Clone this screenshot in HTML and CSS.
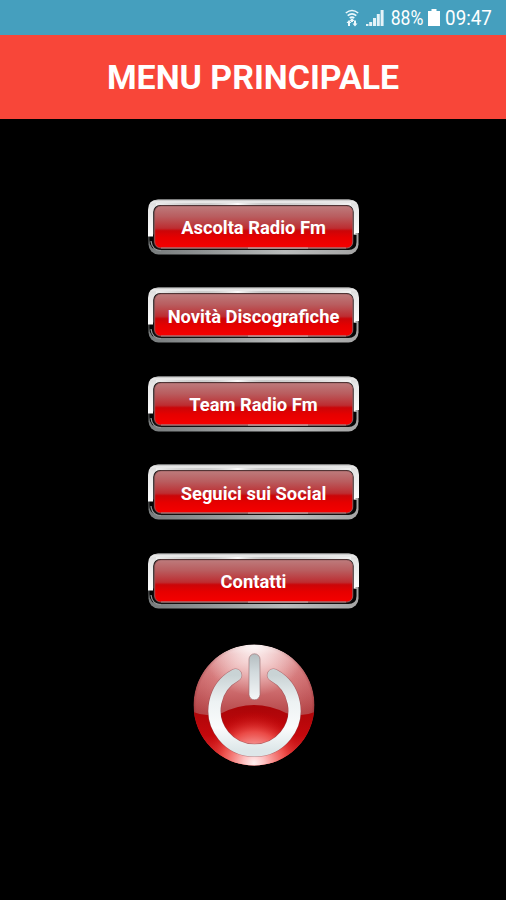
FILE: index.html
```html
<!DOCTYPE html>
<html lang="it">
<head>
<meta charset="utf-8">
<title>Menu Principale</title>
<link rel="stylesheet" href="styles.css">
</head>
<body>
<svg class="defs" width="0" height="0" aria-hidden="true">
  <defs>
    <linearGradient id="silver" x1="0" y1="0" x2="0" y2="1">
      <stop offset="0" stop-color="#b5b5b5"/><stop offset=".06" stop-color="#ececec"/><stop offset=".12" stop-color="#dedede"/><stop offset=".18" stop-color="#e5e5e5"/><stop offset="1" stop-color="#fff"/>
    </linearGradient>
    <linearGradient id="shine" x1="0" y1="0" x2="1" y2="0">
      <stop offset="0" stop-color="#fff" stop-opacity=".5"/><stop offset=".2" stop-color="#999" stop-opacity=".25"/><stop offset=".42" stop-color="#fff" stop-opacity=".9"/><stop offset=".58" stop-color="#999" stop-opacity=".3"/><stop offset="1" stop-color="#fff" stop-opacity=".6"/>
    </linearGradient>
    <linearGradient id="chrome" x1="0" y1="0" x2="1" y2="0">
      <stop offset="0" stop-color="#777b7c"/><stop offset=".25" stop-color="#8e9293"/><stop offset=".65" stop-color="#b9bcbc"/><stop offset="1" stop-color="#a5a5a5"/>
    </linearGradient>
    <linearGradient id="red" x1="0" y1="0" x2="0" y2="1">
      <stop offset="0" stop-color="#bd7b7c"/><stop offset=".25" stop-color="#b95d5f"/><stop offset=".53" stop-color="#bd2d31"/><stop offset=".59" stop-color="#cb0508"/><stop offset=".75" stop-color="#e60000"/><stop offset="1" stop-color="#f60000"/>
    </linearGradient>
    <symbol id="plate" viewBox="0 0 211 56">
      <rect x=".5" y=".5" width="210" height="55" rx="10" fill="url(#chrome)"/>
      <path d="M1.300 36H208.500V43Q208.500 51 200 51H12Q1.300 51 1.300 41Z" fill="#050505"/>
      <path d="M3 42Q4 51.500 13 51.500" fill="none" stroke="#929697" stroke-width="1.300"/>
      <path d="M0 37.500V11Q0 .5 10 .5H201Q211 .5 211 11V34H207.500V35H5V37.500Z" fill="url(#silver)"/>
      <rect x="8" y="4" width="195" height="2.500" fill="url(#shine)"/>
      <rect x="5.200" y="6" width="200.500" height="44.700" rx="7" fill="#171111"/>
      <rect x="6.700" y="7" width="198" height="42" rx="6" fill="url(#red)" stroke="#9c6062" stroke-width=".9"/>
      <path d="M13 49H198" stroke="#a98080" stroke-width="1"/>
      <rect x="100" y="48.600" width="60" height=".9" fill="#eed5d5" opacity=".7"/>
    </symbol>
  </defs>
</svg>
<header class="status">
  <svg class="wifi" viewBox="0 0 14 18"><g fill="none" stroke="#edf8fc" stroke-width="1.600"><path d="M.8 4Q7-1 13.200 4M2.700 6.700Q7 3.200 11.300 6.700M4.700 9Q7 7.200 9.300 9"/></g><path d="M7 9l2.500 3H8v1H6v-1H4.500zM4 11l2.500 3H5v3H3v-3H1.500zM10 17.500L7.500 14.500H9v-3h2v3h1.500z" fill="#edf8fc"/></svg>
  <svg class="signal" viewBox="0 0 18 18"><path d="M0 17v-2h2.500v2zM3.200 17v-4H6.200v4zM7 17v-8H10v8zM10.800 17V5h3v12zM14.600 17V1h3v16z" fill="#e5f3f8"/></svg>
  <span class="percent">88%</span>
  <svg class="battery" viewBox="0 0 12 17"><path d="M3.500 0h5v2H12v15H0V2h3.500z" fill="#fff"/></svg>
  <span class="clock">09:47</span>
</header>
<div class="title"><h1>MENU PRINCIPALE</h1></div>
<main class="menu">
  <button class="item"><svg class="plate"><use href="#plate"/></svg><span>Ascolta Radio Fm</span></button>
  <button class="item"><svg class="plate"><use href="#plate"/></svg><span>Novità Discografiche</span></button>
  <button class="item"><svg class="plate"><use href="#plate"/></svg><span>Team Radio Fm</span></button>
  <button class="item"><svg class="plate"><use href="#plate"/></svg><span>Seguici sui Social</span></button>
  <button class="item"><svg class="plate"><use href="#plate"/></svg><span>Contatti</span></button>
  <button class="power" aria-label="Esci">
    <svg viewBox="0 0 122 122">
      <defs>
        <linearGradient id="ball" x1="0" y1="0" x2="0" y2="1"><stop offset="0" stop-color="#ffe9e9"/><stop offset=".08" stop-color="#efadad"/><stop offset=".28" stop-color="#d97f80"/><stop offset=".56" stop-color="#b84a4c"/></linearGradient>
        <radialGradient id="edge"><stop offset=".72" stop-color="#8d0b12" stop-opacity="0"/><stop offset=".95" stop-color="#9b1c24" stop-opacity=".15"/><stop offset="1" stop-color="#6f1116" stop-opacity=".35"/></radialGradient>
        <linearGradient id="base" x1="0" y1="0" x2="0" y2="1"><stop offset="0" stop-color="#a90508"/><stop offset=".5" stop-color="#c5080c"/><stop offset="1" stop-color="#dd4545"/></linearGradient>
        <radialGradient id="glow" cx="61" cy="119" r="52" gradientUnits="userSpaceOnUse"><stop offset="0" stop-color="#fff0f0"/><stop offset=".2" stop-color="#ffc8c8" stop-opacity=".95"/><stop offset=".6" stop-color="#f45b55" stop-opacity=".8"/><stop offset="1" stop-color="#c00" stop-opacity="0"/></radialGradient>
        <radialGradient id="topglow" cx="61" cy="0" r="52" gradientUnits="userSpaceOnUse"><stop offset="0" stop-color="#fff" stop-opacity=".9"/><stop offset="1" stop-color="#fff" stop-opacity="0"/></radialGradient>
        <linearGradient id="ring" x1="0" y1="0" x2="0" y2="1"><stop offset="0" stop-color="#c9d3d5"/><stop offset=".35" stop-color="#edf2f3"/><stop offset=".7" stop-color="#fafcfc"/><stop offset="1" stop-color="#dde7e9"/></linearGradient>
        <linearGradient id="stem" x1="0" y1="0" x2="0" y2="1"><stop offset="0" stop-color="#b4bdc0"/><stop offset=".4" stop-color="#d2dadd"/><stop offset="1" stop-color="#f5f7f8"/></linearGradient>
        <clipPath id="round"><circle cx="61" cy="61" r="60.500"/></clipPath>
      </defs>
      <g clip-path="url(#round)">
        <circle cx="61" cy="61" r="60.500" fill="url(#ball)"/>
        <circle cx="61" cy="61" r="60.500" fill="url(#edge)"/>
        <circle cx="61" cy="61" r="60.500" fill="url(#topglow)"/>
        <path d="M0 68Q15 74 29 69Q61 53 93 69Q107 74 122 68V122H0Z" fill="url(#base)"/>
        <circle cx="61" cy="119" r="52" fill="url(#glow)"/>
      </g>
      <path d="M42.500 31.200A40 40 0 1 0 80.500 31.200" fill="none" stroke="#8d4b50" stroke-opacity=".6" stroke-width="13.300" stroke-linecap="round"/>
      <path d="M42.500 31.200A40 40 0 1 0 80.500 31.200" fill="none" stroke="url(#ring)" stroke-width="12.200" stroke-linecap="round"/>
      <rect x="56" y="9.800" width="11" height="46" rx="5.500" fill="url(#stem)" stroke="#99686b" stroke-width=".6"/>
    </svg>
  </button>
</main>
</body>
</html>
```
FILE: styles.css
```css
* { box-sizing: border-box; }
body {
  margin: 0;
  height: 900px;
  background: #000;
  color: #fff;
  font-family: Roboto, "Liberation Sans", sans-serif;
  overflow: hidden;
}
.defs { display: block; }
.status {
  display: flex;
  align-items: center;
  justify-content: flex-end;
  height: 35px;
  padding-right: 14px;
  background: #459fbe;
  font-size: 20px;
  line-height: 35px;
  white-space: nowrap;
}
.status span { display: flex; justify-content: center; padding-top: 2px; }
.wifi { width: 14px; height: 18px; margin-right: 7px; }
.signal { width: 18px; height: 18px; margin-right: 6px; }
.percent { width: 34px; margin-right: 4px; transform: scaleX(.88); }
.battery { width: 12px; height: 17px; margin-right: 5px; }
.clock { width: 47px; transform: scaleX(.94); }
.title {
  display: flex;
  align-items: center;
  justify-content: center;
  height: 84px;
  padding-top: 2px;
  background: #f84639;
}
h1 { margin: 0; font-size: 33.900px; line-height: 40px; font-weight: 700; white-space: nowrap; }
.menu { display: flex; flex-direction: column; align-items: center; padding-top: 79.500px; }
button { border: 0; padding: 0; background: none; color: inherit; font: inherit; }
.item {
  display: grid;
  place-items: center;
  width: 211px;
  height: 56px;
  margin-bottom: 32.500px;
  margin-left: 1px;
  font-size: 18.350px;
  font-weight: 700;
  line-height: 22px;
}
.item > * { grid-area: 1 / 1; }
.item span { z-index: 1; padding-top: 3px; white-space: nowrap; }
.plate { display: block; width: 211px; height: 56px; }
.power { width: 122px; height: 122px; margin: 3px 0 0 1px; }
.power svg { display: block; width: 122px; height: 122px; }
```
